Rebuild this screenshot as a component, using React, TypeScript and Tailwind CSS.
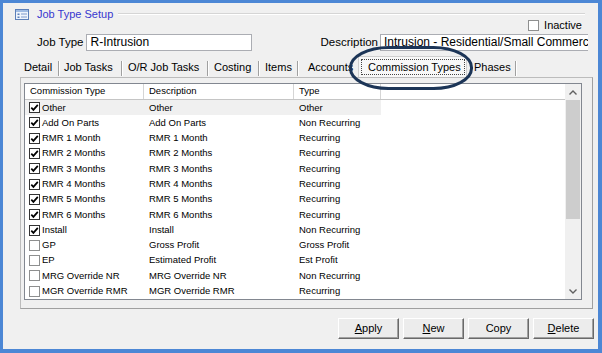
import React from "react";

const Tabs = [
  { id: 1, name: "Detail", w: "w-[38px]", pl: "pl-[4px]", sep: true },
  { id: 2, name: "Job Tasks", w: "w-[61px]", pl: "pl-[4px]", sep: true },
  { id: 3, name: "O/R Job Tasks", w: "w-[84px]", pl: "pl-[5px]", sep: true },
  { id: 4, name: "Costing", w: "w-[49px]", pl: "pl-[5px]", sep: true },
  { id: 5, name: "Items", w: "w-[37px]", pl: "pl-[5px]", sep: true },
  { id: 6, name: "Accounts", w: "w-[59px]", pl: "pl-[9px]", sep: false },
];

const Rows = [
  { on: true, name: "Other", desc: "Other", type: "Other" },
  { on: true, name: "Add On Parts", desc: "Add On Parts", type: "Non Recurring" },
  { on: true, name: "RMR 1 Month", desc: "RMR 1 Month", type: "Recurring" },
  { on: true, name: "RMR 2 Months", desc: "RMR 2 Months", type: "Recurring" },
  { on: true, name: "RMR 3 Months", desc: "RMR 3 Months", type: "Recurring" },
  { on: true, name: "RMR 4 Months", desc: "RMR 4 Months", type: "Recurring" },
  { on: true, name: "RMR 5 Months", desc: "RMR 5 Months", type: "Recurring" },
  { on: true, name: "RMR 6 Months", desc: "RMR 6 Months", type: "Recurring" },
  { on: true, name: "Install", desc: "Install", type: "Non Recurring" },
  { on: false, name: "GP", desc: "Gross Profit", type: "Gross Profit" },
  { on: false, name: "EP", desc: "Estimated Profit", type: "Est Profit" },
  { on: false, name: "MRG Override NR", desc: "MRG Override NR", type: "Non Recurring" },
  { on: false, name: "MGR Override RMR", desc: "MGR Override RMR", type: "Recurring" },
];

const Check = ({ on }: { on: boolean }) => (
  <span
    className={`w-[11px] h-[11px] shrink-0 bg-white border flex items-center justify-center ${
      on ? "border-[#333333]" : "border-[#8e8f8f]"
    }`}
  >
    {on && (
      <svg width="9" height="9" viewBox="0 0 9 9">
        <path d="M1.3 4.6 L3.4 6.9 L7.8 1.9" fill="none" stroke="#000" strokeWidth="1.7" />
      </svg>
    )}
  </span>
);

const Sep = () => (
  <div className="w-[2px] h-[15px] mt-[5px] border-l border-r border-l-[#a0a0a0] border-r-white" />
);

const Btn = ({ label, u }: { label: string; u?: boolean }) => (
  <button className="w-[61px] h-[21px] bg-[#ececec] border border-t-white border-l-white border-r-[#696969] border-b-[#696969] shadow-[inset_-1px_-1px_#a0a0a0] text-[11px] text-black">
    {u ? (
      <>
        <span className="underline">{label[0]}</span>
        {label.slice(1)}
      </>
    ) : (
      label
    )}
  </button>
);

export default function App() {
  return (
    <div
      className="w-[602px] h-[353px] bg-[#4c87d5] pt-[3px] pl-[3px] pr-[4px] pb-[4px]"
      style={{ fontFamily: '"Liberation Sans", Arial, sans-serif' }}
    >
      <div className="relative w-full h-full bg-[#f0f0f0] flex flex-col text-black">
        {/* Title */}
        <div className="mt-[5px] h-[12px] flex items-center pl-[12px]">
          <svg width="14" height="11" viewBox="0 0 14 11" className="shrink-0">
            <rect x="0.5" y="0.5" width="13" height="10" fill="#eef4fc" stroke="#5b7fb9" />
            <rect x="1" y="1" width="12" height="2" fill="#9fbbe3" />
            <rect x="2.5" y="4.5" width="2" height="1.5" fill="#5b7fb9" />
            <rect x="2.5" y="7.5" width="2" height="1.5" fill="#5b7fb9" />
            <rect x="6" y="4.5" width="6" height="1" fill="#7e9acb" />
            <rect x="6" y="7.5" width="6" height="1" fill="#7e9acb" />
          </svg>
          <span className="ml-[8px] text-[11px] text-[#3737cf] leading-none">Job Type Setup</span>
          <div className="flex-1 ml-[5px] mr-[13px] h-[2px] border-t border-b border-t-[#d5d5d5] border-b-white" />
        </div>

        {/* Inactive */}
        <div className="-mt-px h-[12px] flex justify-end items-center pr-[16px]">
          <span className="w-[11px] h-[11px] bg-white border border-[#8e8f8f]" />
          <span className="ml-[5px] text-[11px] leading-none">Inactive</span>
        </div>

        {/* Job type / description */}
        <div className="mt-[3px] h-[17px] flex items-center pl-[34px] pr-[10px] text-[11.5px]">
          <span>Job Type</span>
          <div className="ml-[3px] w-[166px] h-[17px] bg-white border border-[#abadb3] text-[12px] pl-[3px] leading-[15px]">
            R-Intrusion
          </div>
          <div className="flex-1" />
          <span>Description</span>
          <div className="ml-[2px] w-[208px] h-[17px] bg-white border border-[#abadb3] border-r-0 text-[12px] pl-[3px] leading-[15px] overflow-hidden whitespace-nowrap">
            Intrusion - Residential/Small Commercial
          </div>
        </div>

        {/* Tabs */}
        <div className="mt-[5px] h-[21px] flex pl-[17px] text-[11px]">
          {Tabs.map((t) => (
            <React.Fragment key={t.id}>
              <div className={`${t.w} ${t.pl} shrink-0 flex items-center pt-[2px] whitespace-nowrap`}>{t.name}</div>
              {t.sep && <Sep />}
            </React.Fragment>
          ))}
          <div className="w-[109px] shrink-0 bg-[#f8f8f8] border-l border-r border-t border-[#cfcfcf] flex">
            <div className="flex-1 ml-[2px] mr-px mt-[2px] mb-[2px] border border-dotted border-[#444] flex items-center pl-[6px] whitespace-nowrap">
              Commission Types
            </div>
          </div>
          <div className="w-[48px] pl-[7px] shrink-0 flex items-center pt-[2px]">Phases</div>
          <Sep />
        </div>

        {/* Tab panel */}
        <div className="ml-[17px] mr-[5px] h-[232px] border border-[#bcbcbc] border-r-[#a0a0a0] border-b-[#a0a0a0] bg-[#f0f0f0]">
          <div className="ml-[3px] mt-[5px] w-[558px] h-[217px] border border-[#828790] bg-white flex">
            <div className="w-[540px] flex flex-col text-[9.5px]">
              {/* Header */}
              <div className="h-[16px] flex border-b border-[#c5c5c5] bg-white">
                <div className="w-[119px] pl-[5px] flex items-center border-r border-[#d5d5d5]">Commission Type</div>
                <div className="w-[150px] pl-[5px] flex items-center border-r border-[#d5d5d5]">Description</div>
                <div className="w-[87px] pl-[5px] flex items-center border-r border-[#d5d5d5]">Type</div>
                <div className="flex-1" />
              </div>
              {Rows.map((r, i) => (
                <div key={i} className="h-[15.3px] flex">
                  <div className={`w-[356px] flex ${i === 0 ? "bg-[#f0f0f0]" : ""}`}>
                    <div className="w-[119px] pl-[4px] flex items-center gap-[2px] whitespace-nowrap">
                      <Check on={r.on} />
                      {r.name}
                    </div>
                    <div className="w-[150px] pl-[5px] flex items-center whitespace-nowrap">{r.desc}</div>
                    <div className="w-[87px] pl-[5px] flex items-center whitespace-nowrap">{r.type}</div>
                  </div>
                  <div className="flex-1" />
                </div>
              ))}
            </div>
            {/* Scrollbar */}
            <div className="w-[16px] bg-[#f0f0f0] flex flex-col">
              <div className="h-[16px] flex items-center justify-center">
                <svg width="8" height="5" viewBox="0 0 8 5">
                  <polyline points="0.5,4.5 4,1 7.5,4.5" fill="none" stroke="#606060" strokeWidth="1.4" />
                </svg>
              </div>
              <div className="mx-px h-[119px] bg-[#cdcdcd]" />
              <div className="flex-1" />
              <div className="h-[16px] flex items-center justify-center">
                <svg width="8" height="5" viewBox="0 0 8 5">
                  <polyline points="0.5,0.5 4,4 7.5,0.5" fill="none" stroke="#606060" strokeWidth="1.4" />
                </svg>
              </div>
            </div>
          </div>
        </div>

        {/* Buttons */}
        <div className="mt-[9px] flex justify-end gap-[4px] pr-[4px]">
          <Btn label="Apply" u />
          <Btn label="New" u />
          <Btn label="Copy" />
          <Btn label="Delete" u />
        </div>

        {/* Annotation */}
        <svg
          width="124"
          height="44"
          viewBox="0 0 124 44"
          className="absolute left-[346px] top-[43px] pointer-events-none"
        >
          <rect x="1.5" y="1.5" width="121" height="41" rx="38" ry="20" fill="none" stroke="#1c3557" strokeWidth="3" />
        </svg>
      </div>
    </div>
  );
}
